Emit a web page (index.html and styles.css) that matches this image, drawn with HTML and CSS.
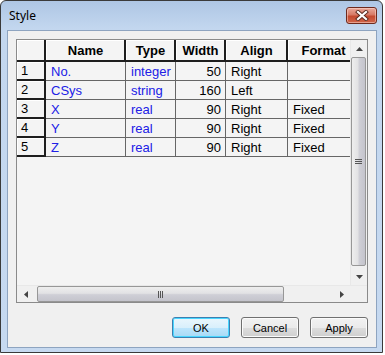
FILE: index.html
```html
<!DOCTYPE html>
<html lang="en">
<head>
  <meta charset="UTF-8">
  <title>Style</title>
  <link rel="stylesheet" href="styles.css">
</head>
<body>

  <div class="window">
    <div class="titlebar">
      <span class="title">Style</span>
      <div class="close">
        <svg width="14" height="11" viewBox="0 0 14 11">
          <path d="M3 2 L11 9 M11 2 L3 9" stroke="#5a2a20" stroke-width="4" stroke-linecap="square"/>
          <path d="M3 2 L11 9 M11 2 L3 9" stroke="#fff" stroke-width="2.2" stroke-linecap="square"/>
        </svg>
      </div>
    </div>

    <div class="client">
      <div class="gridbox">
        <div class="grid-top">
          <div class="sheet">
            <div class="cell hd"></div>
            <div class="cell hd">Name</div>
            <div class="cell hd">Type</div>
            <div class="cell hd">Width</div>
            <div class="cell hd">Align</div>
            <div class="cell hd">Format</div>

            <div class="cell rh">1</div>
            <div class="cell blue">No.</div>
            <div class="cell blue">integer</div>
            <div class="cell num">50</div>
            <div class="cell">Right</div>
            <div class="cell"></div>

            <div class="cell rh">2</div>
            <div class="cell blue">CSys</div>
            <div class="cell blue">string</div>
            <div class="cell num">160</div>
            <div class="cell">Left</div>
            <div class="cell"></div>

            <div class="cell rh">3</div>
            <div class="cell blue">X</div>
            <div class="cell blue">real</div>
            <div class="cell num">90</div>
            <div class="cell">Right</div>
            <div class="cell">Fixed</div>

            <div class="cell rh">4</div>
            <div class="cell blue">Y</div>
            <div class="cell blue">real</div>
            <div class="cell num">90</div>
            <div class="cell">Right</div>
            <div class="cell">Fixed</div>

            <div class="cell rh">5</div>
            <div class="cell blue">Z</div>
            <div class="cell blue">real</div>
            <div class="cell num">90</div>
            <div class="cell">Right</div>
            <div class="cell">Fixed</div>
          </div>

          <div class="vscroll">
            <div class="arrow">
              <svg width="7" height="4" viewBox="0 0 7 4"><path d="M3.5 0 L7 4 L0 4 Z" fill="#444"/></svg>
            </div>
            <div class="vtrack">
              <div class="vthumb">
                <svg width="7" height="7" viewBox="0 0 7 7"><path d="M0 1.5 H7 M0 3.5 H7 M0 5.5 H7" stroke="#555" stroke-width="1"/></svg>
              </div>
            </div>
            <div class="arrow">
              <svg width="7" height="4" viewBox="0 0 7 4"><path d="M0 0 L7 0 L3.5 4 Z" fill="#444"/></svg>
            </div>
          </div>
        </div>

        <div class="hscroll">
          <div class="arrow">
            <svg width="4" height="7" viewBox="0 0 4 7"><path d="M4 0 L4 7 L0 3.5 Z" fill="#444"/></svg>
          </div>
          <div class="htrack">
            <div class="hthumb">
              <svg width="7" height="7" viewBox="0 0 7 7"><path d="M1.5 0 V7 M3.5 0 V7 M5.5 0 V7" stroke="#555" stroke-width="1"/></svg>
            </div>
          </div>
          <div class="arrow">
            <svg width="4" height="7" viewBox="0 0 4 7"><path d="M0 0 L4 3.5 L0 7 Z" fill="#444"/></svg>
          </div>
          <div class="sizebox"></div>
        </div>
      </div>

      <div class="buttons">
        <button class="btn default">OK</button>
        <button class="btn">Cancel</button>
        <button class="btn">Apply</button>
      </div>
    </div>
  </div>

</body>
</html>
```

FILE: styles.css
```css
* {
  box-sizing: border-box;
}

body {
  margin: 0;
  background: #ffffff;
  font-family: "Liberation Sans", Arial, sans-serif;
}

.window {
  width: 383px;
  height: 353px;
  border: 1px solid #3a3a3a;
  border-radius: 6px 6px 0 0;
  background: linear-gradient(#aec6e4, #c3d7ef 28px, #c6d9f0);
  display: flex;
  flex-direction: column;
}

.titlebar {
  height: 29px;
  display: flex;
  justify-content: space-between;
  align-items: flex-start;
  padding: 0 5px 0 8px;
}

.title {
  font-family: "Noto Sans", sans-serif;
  font-size: 12px;
  line-height: 16px;
  margin-top: 7px;
  color: #000;
}

.close {
  width: 31px;
  height: 17px;
  margin-top: 6px;
  border: 1px solid #6e2a1e;
  border-radius: 3px;
  background: linear-gradient(#e9a99b, #d77a66 45%, #c44a30 55%, #d0664c);
  box-shadow: inset 0 0 0 1px rgba(255, 220, 210, 0.5);
  display: flex;
  align-items: center;
  justify-content: center;
}

.client {
  flex: 1;
  margin: 0 5px 4px 6px;
  border: 1px solid #8ea4c0;
  background: #f0f0f0;
  padding: 8px 8px 0 8px;
  display: flex;
  flex-direction: column;
}

.gridbox {
  height: 264px;
  border: 1px solid #8a8a8a;
  background: #f4f4f4;
  display: flex;
  flex-direction: column;
}

.grid-top {
  display: flex;
  height: 245px;
}

.sheet {
  width: 335px;
  overflow: hidden;
  display: grid;
  grid-template-columns: 29px 80px 50px 50px 62px 72px;
  grid-template-rows: 22px repeat(5, 19px);
  align-content: start;
}

.cell {
  border-right: 1px solid #666666;
  border-bottom: 1px solid #666666;
  padding: 1px 4px 0 5px;
  font-size: 13px;
  line-height: 17px;
  white-space: nowrap;
  overflow: hidden;
  color: #000;
}

.hd {
  border-right: 2px solid #1e1e1e;
  border-bottom: 2px solid #1e1e1e;
  box-shadow: inset 1px 1px 0 #ffffff;
  font-weight: bold;
  text-align: center;
  padding-top: 2px;
  line-height: 18px;
}

.rh {
  border-right: 2px solid #1e1e1e;
  border-bottom: 2px solid #1e1e1e;
  box-shadow: inset 1px 1px 0 #ffffff;
  padding-left: 4px;
  line-height: 16px;
}

.blue {
  color: #2020e6;
}

.num {
  text-align: right;
}

.vscroll {
  width: 17px;
  display: flex;
  flex-direction: column;
  background: #f0f0f0;
  border-left: 1px solid #e8e8e8;
}

.arrow {
  width: 17px;
  height: 17px;
  flex: none;
  display: flex;
  align-items: center;
  justify-content: center;
}

.vscroll .arrow {
  width: 16px;
}

.vtrack {
  flex: 1;
  padding: 0 1px 2px 0;
  display: flex;
}

.vthumb {
  flex: 1;
  border: 1px solid #979797;
  border-radius: 2px;
  background: linear-gradient(to right, #eeeeee, #e2e2e4 45%, #cfcfd6 55%, #c4c4cc);
  display: flex;
  align-items: center;
  justify-content: center;
}

.hscroll {
  height: 17px;
  display: flex;
  background: #f0f0f0;
  border-top: 1px solid #e8e8e8;
}

.hscroll .arrow {
  height: 16px;
}

.htrack {
  width: 301px;
  padding: 0 0 0 3px;
  display: flex;
}

.hthumb {
  width: 247px;
  border: 1px solid #979797;
  border-radius: 2px;
  background: linear-gradient(#eeeeee, #e2e2e4 45%, #cfcfd6 55%, #c4c4cc);
  display: flex;
  align-items: center;
  justify-content: center;
}

.sizebox {
  width: 17px;
  height: 16px;
  background: #f0f0f0;
}

.buttons {
  margin-top: 14px;
  display: flex;
  justify-content: flex-end;
  gap: 11px;
}

.btn {
  width: 58px;
  height: 21px;
  padding: 0;
  border: 1px solid #707070;
  border-radius: 3px;
  background: linear-gradient(#f2f2f2, #ebebeb 50%, #dddddd 50%, #cfcfcf);
  box-shadow: inset 0 0 0 1px #fbfbfb;
  font-family: "Liberation Sans", Arial, sans-serif;
  font-size: 11px;
  color: #000;
}

.btn.default {
  border-color: #3c7fb1;
  background: linear-gradient(#eaf6fd, #d9f0fc 50%, #bee6fd 50%, #a7d9f5);
  box-shadow: inset 0 0 0 1px #48d6ff;
}
```
